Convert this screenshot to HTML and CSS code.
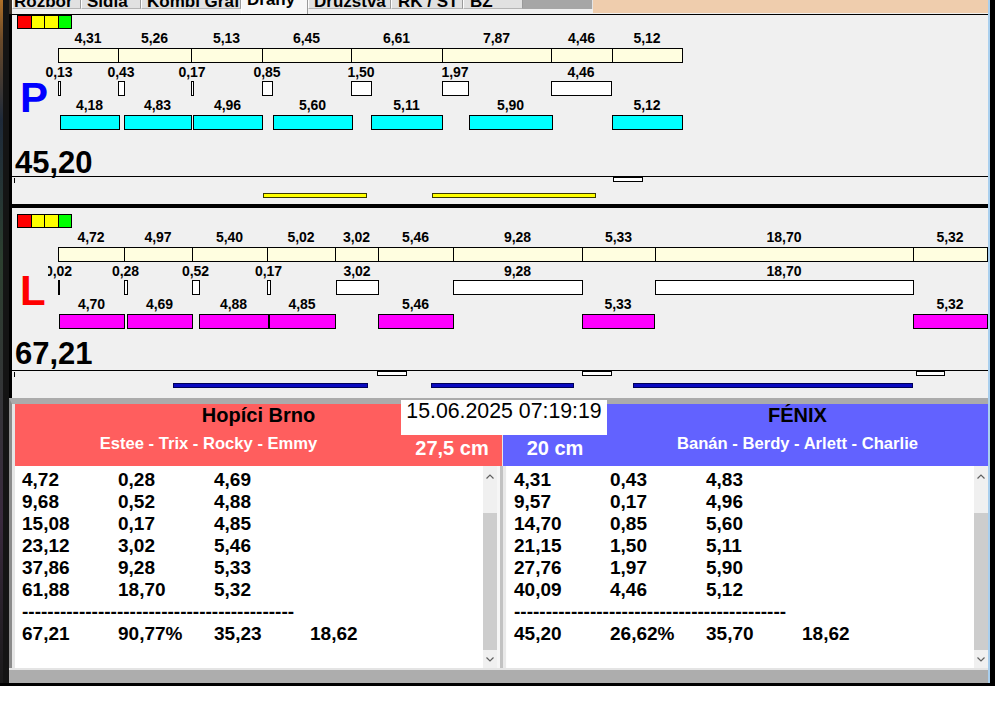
FILE: index.html
```html
<!DOCTYPE html>
<html lang="cs">
<head>
<meta charset="utf-8">
<title>Dráhy</title>
<link rel="stylesheet" href="styles.css">
</head>
<body>
<div class="window">
  <div class="edge-left"></div>
  <div class="main">
    <nav class="tabbar">
      <div class="tab tab--w69 tab--first"><span class="tab-label">Rozbor</span></div>
      <div class="tab tab--w60"><span class="tab-label">Sídla</span></div>
      <div class="tab tab--w100"><span class="tab-label">Kombi Graf</span></div>
      <div class="tab tab--w67 tab--active"><span class="tab-label">Dráhy</span></div>
      <div class="tab tab--w83"><span class="tab-label">Družstva</span></div>
      <div class="tab tab--w72 tab--wide-pad"><span class="tab-label">RK / ST</span></div>
      <div class="tab tab--w60 tab--wide-pad"><span class="tab-label">BZ</span></div>
      <div class="tabbar-gray"></div>
      <div class="tabbar-peach"></div>
    </nav>

    <section class="panel panel--p">
      <div class="legend"><span class="legend-sq legend-sq--red"></span><span class="legend-sq legend-sq--yellow"></span><span class="legend-sq legend-sq--yellow"></span><span class="legend-sq legend-sq--green"></span></div>
      <div class="tracks">
        <div class="track track--lab1">
          <span class="lbl" style="left:76px">4,31</span>
          <span class="lbl" style="left:142.5px">5,26</span>
          <span class="lbl" style="left:214.5px">5,13</span>
          <span class="lbl" style="left:294.5px">6,45</span>
          <span class="lbl" style="left:384.5px">6,61</span>
          <span class="lbl" style="left:484.5px">7,87</span>
          <span class="lbl" style="left:569.5px">4,46</span>
          <span class="lbl" style="left:635px">5,12</span>
        </div>
        <div class="track track--box">
          <span class="box box--lap" style="left:46px;width:61px"></span>
          <span class="box box--lap" style="left:106px;width:74px"></span>
          <span class="box box--lap" style="left:179px;width:72px"></span>
          <span class="box box--lap" style="left:250px;width:90px"></span>
          <span class="box box--lap" style="left:339px;width:92px"></span>
          <span class="box box--lap" style="left:430px;width:110px"></span>
          <span class="box box--lap" style="left:539px;width:62px"></span>
          <span class="box box--lap" style="left:600px;width:71px"></span>
        </div>
        <div class="track track--lab2">
          <span class="lbl" style="left:47px">0,13</span>
          <span class="lbl" style="left:109px">0,43</span>
          <span class="lbl" style="left:180px">0,17</span>
          <span class="lbl" style="left:255px">0,85</span>
          <span class="lbl" style="left:349px">1,50</span>
          <span class="lbl" style="left:443px">1,97</span>
          <span class="lbl" style="left:569px">4,46</span>
        </div>
        <div class="track track--box">
          <span class="box box--gap" style="left:46px;width:3px"></span>
          <span class="box box--gap" style="left:106px;width:7px"></span>
          <span class="box box--gap" style="left:179px;width:3px"></span>
          <span class="box box--gap" style="left:250px;width:11px"></span>
          <span class="box box--gap" style="left:339px;width:21px"></span>
          <span class="box box--gap" style="left:430px;width:27px"></span>
          <span class="box box--gap" style="left:539px;width:61px"></span>
        </div>
        <div class="track track--lab1">
          <span class="lbl" style="left:77.5px">4,18</span>
          <span class="lbl" style="left:145.5px">4,83</span>
          <span class="lbl" style="left:215.5px">4,96</span>
          <span class="lbl" style="left:300.5px">5,60</span>
          <span class="lbl" style="left:394.5px">5,11</span>
          <span class="lbl" style="left:498.5px">5,90</span>
          <span class="lbl" style="left:635px">5,12</span>
        </div>
        <div class="track track--box">
          <span class="box box--cyan" style="left:48px;width:60px"></span>
          <span class="box box--cyan" style="left:112px;width:68px"></span>
          <span class="box box--cyan" style="left:181px;width:70px"></span>
          <span class="box box--cyan" style="left:261px;width:80px"></span>
          <span class="box box--cyan" style="left:359px;width:72px"></span>
          <span class="box box--cyan" style="left:457px;width:84px"></span>
          <span class="box box--cyan" style="left:600px;width:71px"></span>
        </div>
      </div>
      <div class="side-letter side-letter--p">P</div>
      <div class="total total--p">45,20</div>
      <div class="timeline timeline--p">
        <span class="tl-tick"></span>
        <span class="tl-mark" style="left:601px;width:30px"></span>
        <span class="tl-bar tl-bar--yellow" style="left:251px;width:104px"></span>
        <span class="tl-bar tl-bar--yellow" style="left:420px;width:164px"></span>
      </div>
    </section>

    <div class="divider"></div>

    <section class="panel panel--l">
      <div class="legend"><span class="legend-sq legend-sq--red"></span><span class="legend-sq legend-sq--yellow"></span><span class="legend-sq legend-sq--yellow"></span><span class="legend-sq legend-sq--green"></span></div>
      <div class="tracks">
        <div class="track track--lab1">
          <span class="lbl" style="left:79px">4,72</span>
          <span class="lbl" style="left:146px">4,97</span>
          <span class="lbl" style="left:217.5px">5,40</span>
          <span class="lbl" style="left:289px">5,02</span>
          <span class="lbl" style="left:344.5px">3,02</span>
          <span class="lbl" style="left:403.5px">5,46</span>
          <span class="lbl" style="left:505.5px">9,28</span>
          <span class="lbl" style="left:606.5px">5,33</span>
          <span class="lbl" style="left:772px">18,70</span>
          <span class="lbl" style="left:938px">5,32</span>
        </div>
        <div class="track track--box">
          <span class="box box--lap" style="left:46px;width:67px"></span>
          <span class="box box--lap" style="left:112px;width:69px"></span>
          <span class="box box--lap" style="left:180px;width:76px"></span>
          <span class="box box--lap" style="left:255px;width:69px"></span>
          <span class="box box--lap" style="left:323px;width:44px"></span>
          <span class="box box--lap" style="left:366px;width:76px"></span>
          <span class="box box--lap" style="left:441px;width:130px"></span>
          <span class="box box--lap" style="left:570px;width:74px"></span>
          <span class="box box--lap" style="left:643px;width:259px"></span>
          <span class="box box--lap" style="left:901px;width:75px"></span>
        </div>
        <div class="track track--lab2">
          <span class="lbl" style="left:46.5px">0,02</span>
          <span class="lbl" style="left:113.5px">0,28</span>
          <span class="lbl" style="left:183.5px">0,52</span>
          <span class="lbl" style="left:256.5px">0,17</span>
          <span class="lbl" style="left:345px">3,02</span>
          <span class="lbl" style="left:505.5px">9,28</span>
          <span class="lbl" style="left:772px">18,70</span>
        </div>
        <div class="track track--box">
          <span class="box box--gap" style="left:46px;width:2px"></span>
          <span class="box box--gap" style="left:112px;width:4px"></span>
          <span class="box box--gap" style="left:180px;width:8px"></span>
          <span class="box box--gap" style="left:255px;width:4px"></span>
          <span class="box box--gap" style="left:324px;width:43px"></span>
          <span class="box box--gap" style="left:441px;width:130px"></span>
          <span class="box box--gap" style="left:643px;width:259px"></span>
        </div>
        <div class="track track--lab1">
          <span class="lbl" style="left:79.5px">4,70</span>
          <span class="lbl" style="left:147.5px">4,69</span>
          <span class="lbl" style="left:221.5px">4,88</span>
          <span class="lbl" style="left:290px">4,85</span>
          <span class="lbl" style="left:403.5px">5,46</span>
          <span class="lbl" style="left:606px">5,33</span>
          <span class="lbl" style="left:938px">5,32</span>
        </div>
        <div class="track track--box">
          <span class="box box--magenta" style="left:47px;width:66px"></span>
          <span class="box box--magenta" style="left:115px;width:66px"></span>
          <span class="box box--magenta" style="left:187px;width:70px"></span>
          <span class="box box--magenta" style="left:257px;width:67px"></span>
          <span class="box box--magenta" style="left:366px;width:76px"></span>
          <span class="box box--magenta" style="left:570px;width:73px"></span>
          <span class="box box--magenta" style="left:901px;width:75px"></span>
        </div>
      </div>
      <div class="side-letter side-letter--l">L</div>
      <div class="total total--l">67,21</div>
      <div class="timeline timeline--l">
        <span class="tl-tick"></span>
        <span class="tl-mark" style="left:365px;width:30px"></span>
        <span class="tl-mark" style="left:570px;width:30px"></span>
        <span class="tl-mark" style="left:904px;width:29px"></span>
        <span class="tl-bar tl-bar--blue" style="left:161px;width:195px"></span>
        <span class="tl-bar tl-bar--blue" style="left:419px;width:143px"></span>
        <span class="tl-bar tl-bar--blue" style="left:621px;width:280px"></span>
      </div>
    </section>

    <section class="bottom">
      <div class="date-box">15.06.2025 07:19:19</div>
      <div class="heads">
        <div class="team team--home">
          <div class="team-title">Hopíci Brno</div>
          <div class="team-sub">
            <div class="team-names team-names--home">Estee - Trix - Rocky - Emmy</div>
            <div class="team-size team-size--home">27,5 cm</div>
          </div>
        </div>
        <div class="team team--away">
          <div class="team-title team-title--away">FÉNIX</div>
          <div class="team-sub">
            <div class="team-size team-size--away">20 cm</div>
            <div class="team-names team-names--away">Banán - Berdy - Arlett - Charlie</div>
          </div>
        </div>
      </div>
      <div class="lists">
        <div class="list list--home">
          <div class="list-body">
            <div class="row"><span>4,72</span><span>0,28</span><span>4,69</span></div>
            <div class="row"><span>9,68</span><span>0,52</span><span>4,88</span></div>
            <div class="row"><span>15,08</span><span>0,17</span><span>4,85</span></div>
            <div class="row"><span>23,12</span><span>3,02</span><span>5,46</span></div>
            <div class="row"><span>37,86</span><span>9,28</span><span>5,33</span></div>
            <div class="row"><span>61,88</span><span>18,70</span><span>5,32</span></div>
            <div class="row row--dash">-------------------------------------------</div>
            <div class="row"><span>67,21</span><span>90,77%</span><span>35,23</span><span>18,62</span></div>
          </div>
          <div class="scroll">
            <div class="sb-btn sb-btn--up"><svg width="8" height="5" viewBox="0 0 8 5"><polyline points="0.5,4.5 4,1 7.5,4.5" fill="none" stroke="#606060" stroke-width="1.2"/></svg></div>
            <div class="sb-gap"></div>
            <div class="sb-thumb"></div>
            <div class="sb-btn sb-btn--down"><svg width="8" height="5" viewBox="0 0 8 5"><polyline points="0.5,0.5 4,4 7.5,0.5" fill="none" stroke="#606060" stroke-width="1.2"/></svg></div>
          </div>
        </div>
        <div class="list-sep"></div>
        <div class="list list--away">
          <div class="list-body">
            <div class="row"><span>4,31</span><span>0,43</span><span>4,83</span></div>
            <div class="row"><span>9,57</span><span>0,17</span><span>4,96</span></div>
            <div class="row"><span>14,70</span><span>0,85</span><span>5,60</span></div>
            <div class="row"><span>21,15</span><span>1,50</span><span>5,11</span></div>
            <div class="row"><span>27,76</span><span>1,97</span><span>5,90</span></div>
            <div class="row"><span>40,09</span><span>4,46</span><span>5,12</span></div>
            <div class="row row--dash">-------------------------------------------</div>
            <div class="row"><span>45,20</span><span>26,62%</span><span>35,70</span><span>18,62</span></div>
          </div>
          <div class="scroll">
            <div class="sb-btn sb-btn--up"><svg width="8" height="5" viewBox="0 0 8 5"><polyline points="0.5,4.5 4,1 7.5,4.5" fill="none" stroke="#606060" stroke-width="1.2"/></svg></div>
            <div class="sb-gap"></div>
            <div class="sb-thumb"></div>
            <div class="sb-btn sb-btn--down"><svg width="8" height="5" viewBox="0 0 8 5"><polyline points="0.5,0.5 4,4 7.5,0.5" fill="none" stroke="#606060" stroke-width="1.2"/></svg></div>
          </div>
        </div>
      </div>
    </section>
    <div class="foot"></div>
  </div>
  <div class="edge-right"></div>
</div>
</body>
</html>
```

FILE: styles.css
```css
* { box-sizing: border-box; }
html, body { margin: 0; padding: 0; }
body {
  width: 995px;
  height: 716px;
  overflow: hidden;
  background: #fff;
  color: #000;
  font-family: "Liberation Sans", Arial, sans-serif;
}

.window {
  display: flex;
  height: 686px;
  border-bottom: 3px solid #000;
}
.edge-left {
  width: 9px;
  flex: none;
  background:
    linear-gradient(to right, transparent 0 3px, #141414 3px),
    linear-gradient(#b07028 0, #6a4a2a 40px, #1e2a3a 120px, #2d4030 260px, #3a2a3e 520px, #1a1a1a 683px);
}
.main {
  width: 979px;
  flex: none;
  display: flex;
  flex-direction: column;
}
.edge-right {
  width: 7px;
  flex: none;
  background: #000;
  border-left: 2px solid #a9cfee;
}

/* tabs */
.tabbar {
  height: 14px;
  flex: none;
  display: flex;
  align-items: flex-start;
  background: #f0f0f0;
  border-left: 3px solid #3a3026;
}
.tab {
  height: 9px;
  overflow: hidden;
  padding-left: 5px;
  background: #e1e1e1;
  border-left: 1px solid #fdfdfd;
  border-right: 1px solid #9a9a9a;
  border-bottom: 1px solid #b4b4b4;
  font-size: 17px;
  font-weight: bold;
}
.tab--first { padding-left: 1px; }
.tab--wide-pad { padding-left: 6px; }
.tab--w69 { width: 69px; }
.tab--w60 { width: 60px; }
.tab--w100 { width: 100px; }
.tab--w67 { width: 67px; }
.tab--w83 { width: 83px; }
.tab--w72 { width: 72px; }
.tab-label {
  display: block;
  line-height: 17px;
  margin-top: -7px;
  white-space: nowrap;
}
.tab--active {
  height: 14px;
  background: #f7f7f7;
  border-bottom: none;
}
.tab--active .tab-label { margin-top: -9px; }
.tabbar-gray {
  width: 70px;
  height: 9px;
  background: #a6a6a6;
  border-right: 1px solid #e4e4e4;
}
.tabbar-peach {
  flex: 1;
  height: 13px;
  background: #efcdad;
}

/* chart panels */
.panel {
  position: relative;
  height: 190px;
  flex: none;
  background: #f0f0f0;
  border-left: 3px solid #000;
}
.panel--p { border-top: 1px solid #000; }
.panel--l { padding-top: 6px; }
.divider {
  height: 4px;
  flex: none;
  background: #000;
}

.legend {
  display: flex;
  width: 55px;
  height: 14px;
  margin-left: 5px;
  border: 1px solid #000;
}
.legend-sq {
  flex: 1;
  border-right: 1px solid #000;
}
.legend-sq:last-child { border-right: none; }
.legend-sq--red { background: #ff0000; }
.legend-sq--yellow { background: #ffff00; }
.legend-sq--green { background: #00ff00; }

.tracks { position: relative; }
.track {
  position: relative;
  font-size: 14px;
  font-weight: bold;
}
.track--lab1 { height: 19px; line-height: 19px; }
.track--lab2 { height: 18px; line-height: 18px; }
.track--box { height: 15px; }
.lbl {
  position: absolute;
  top: 0;
  transform: translateX(-50%);
  white-space: nowrap;
}
.box {
  position: absolute;
  top: 0;
  height: 15px;
  border: 1px solid #000;
}
.box--lap { background: #fffee0; }
.box--gap { background: #fff; }
.box--cyan { background: #00ffff; }
.box--magenta { background: #ff00ff; }

.side-letter {
  position: absolute;
  left: 8px;
  font-size: 42px;
  font-weight: bold;
  line-height: 42px;
}
.side-letter--p {
  top: 62px;
  color: #0000ff;
}
.side-letter--l {
  top: 54px;
  width: 28px;
  padding-top: 8px;
  color: #ff0000;
  background: #f0f0f0;
  z-index: 1;
}

.total {
  height: 26px;
  padding-left: 3px;
  font-size: 31px;
  font-weight: bold;
  line-height: 26px;
}
.total--p { margin-top: 20px; }
.total--l { margin-top: 12px; }

.timeline {
  position: relative;
  height: 28px;
  border-top: 1px solid #000;
}
.timeline--l { margin-top: 3px; }
.tl-tick {
  position: absolute;
  left: 2px;
  top: 1px;
  width: 1px;
  height: 5px;
  background: #000;
}
.tl-mark {
  position: absolute;
  top: 0;
  height: 5px;
  background: #fff;
  border: 1px solid #000;
}
.tl-bar {
  position: absolute;
  height: 5px;
}
.tl-bar--yellow {
  top: 16px;
  background: #ffff00;
  border: 1px solid #3a3a00;
}
.tl-bar--blue {
  top: 12px;
  background: #0a0ac0;
  border: 1px solid #00005a;
}

/* bottom teams */
.bottom {
  position: relative;
  flex: none;
  border-top: 6px solid #ababab;
  border-left: 3px solid #8c8c8c;
  padding-left: 3px;
  background: #e6e6e6;
}
.date-box {
  position: absolute;
  left: 389px;
  top: -4px;
  width: 206px;
  height: 35px;
  background: #fff;
  font-size: 21.3px;
  line-height: 22px;
  text-align: center;
  z-index: 2;
}
.heads {
  display: flex;
  height: 62px;
}
.team {
  display: grid;
  grid-template-rows: 30px 32px;
}
.team--home {
  width: 487px;
  background: #ff5e5e;
}
.team--away {
  flex: 1;
  margin-left: 1px;
  background: #6262ff;
}
.team-title {
  font-size: 20px;
  font-weight: bold;
  line-height: 23px;
  text-align: center;
}
.team-title--away { padding-left: 104px; }
.team-sub {
  display: flex;
  align-items: flex-start;
  color: #fff;
  font-weight: bold;
}
.team-names {
  font-size: 16.6px;
  line-height: 20px;
  text-align: center;
  white-space: nowrap;
}
.team-names--home { width: 387px; }
.team-names--away { flex: 1; }
.team-size {
  font-size: 20px;
  line-height: 28px;
  text-align: center;
  white-space: nowrap;
}
.team-size--home { width: 100px; }
.team-size--away { width: 104px; }

.lists {
  display: flex;
  height: 202px;
}
.list {
  display: flex;
  background: #fff;
}
.list--home { width: 482px; }
.list--away { flex: 1; }
.list-sep {
  width: 10px;
  background: linear-gradient(to right, #f6f6f6 0 3px, #c2c2c2 3px 6px, #e9e9e9 6px 9px, #fdfdfd 9px);
}
.list-body {
  flex: 1;
  padding: 3px 0 0 7px;
  font-size: 19px;
  font-weight: bold;
  line-height: 22px;
}
.row {
  display: grid;
  grid-template-columns: 96px 96px 96px 96px;
  white-space: nowrap;
  height: 22px;
}
.row--dash { display: block; }

.scroll {
  width: 14px;
  display: flex;
  flex-direction: column;
  background: #f0f0f0;
}
.sb-btn {
  display: flex;
  align-items: center;
  justify-content: center;
}
.sb-btn--up { height: 20px; }
.sb-btn--down { height: 18px; }
.sb-gap { height: 27px; }
.sb-thumb {
  height: 137px;
  background: #cdcdcd;
}

.foot {
  height: 15px;
  flex: none;
  background: #adadad;
  border-top: 2px solid #e4e4e4;
}
```
